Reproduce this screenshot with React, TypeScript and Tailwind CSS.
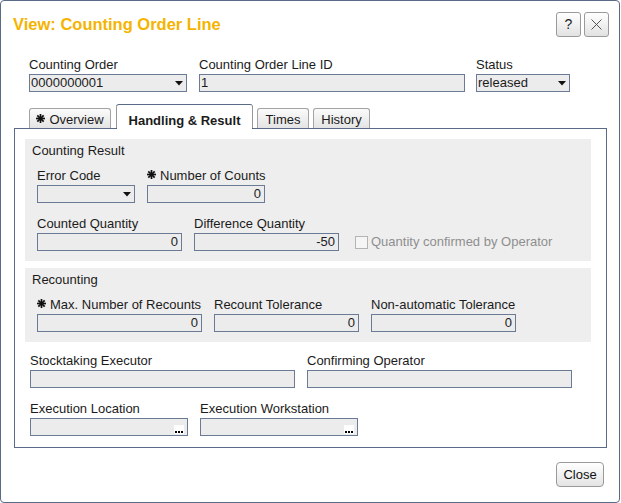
import type { ReactNode } from "react";

function Star() {
  return (
    <svg width="9" height="9" viewBox="0 0 9 9" className="inline-block mr-[4px] relative -top-[2px]">
      <g stroke="#111" strokeWidth="1.7">
        <line x1="4.5" y1="0" x2="4.5" y2="9" />
        <line x1="0" y1="4.5" x2="9" y2="4.5" />
        <line x1="1.3" y1="1.3" x2="7.7" y2="7.7" />
        <line x1="7.7" y1="1.3" x2="1.3" y2="7.7" />
      </g>
    </svg>
  );
}

function Arrow() {
  return (
    <svg width="8" height="5" viewBox="0 0 8 5" className="shrink-0">
      <path d="M0 0 H8 L4 4.5 Z" fill="#111" />
    </svg>
  );
}

function Dots() {
  return (
    <span className="self-end mb-px flex gap-px bg-white px-px pt-[6px] pb-[1px]">
      <span className="w-[2px] h-[2px] bg-black" />
      <span className="w-[2px] h-[2px] bg-black" />
      <span className="w-[2px] h-[2px] bg-black" />
    </span>
  );
}

type FieldProps = {
  label: string;
  width: string;
  star?: boolean;
  value?: string;
  kind?: "text" | "number" | "select" | "lookup";
};

function Field({ label, width, star, value = "", kind = "text" }: FieldProps) {
  return (
    <div className={`${width} shrink-0`}>
      <div className="leading-[17px] mb-px whitespace-nowrap">
        {star && <Star />}
        {label}
      </div>
      <div
        className={`h-[18px] border border-[#6b7b95] bg-[#ececec] flex items-center leading-[16px] ${
          kind === "number" ? "justify-end pr-[3px]" : "justify-between pl-px pr-[3px]"
        }`}
      >
        {kind === "number" ? value : <span>{value}</span>}
        {kind === "select" && <Arrow />}
        {kind === "lookup" && <Dots />}
      </div>
    </div>
  );
}

function Group({ title, children }: { title: string; children: ReactNode }) {
  return (
    <div className="bg-[#eeeeee] w-[566px] pt-[3px] pb-[10px]">
      <div className="leading-[17px] pl-[7px]">{title}</div>
      <div className="pl-[12px]">{children}</div>
    </div>
  );
}

function Tab({ label, width, star }: { label: string; width: string; star?: boolean }) {
  return (
    <div
      className={`${width} h-[20px] mb-px border border-b-0 border-[#a3a3a3] rounded-t-[3px] bg-gradient-to-b from-[#fbfbfb] to-[#e4e4e4] text-center leading-[17px] pt-[2px] whitespace-nowrap`}
    >
      {star && <Star />}
      {label}
    </div>
  );
}

export default function App() {
  return (
    <div className="w-[621px] h-[503px] bg-white font-['Liberation_Sans',Arial,sans-serif] text-[13px] text-[#1b1b1b]">
      <div className="w-[620px] h-[503px] border border-[#5a6b87] rounded-[4px] flex flex-col">
        {/* Header */}
        <div className="flex items-center justify-between pl-[12px] pr-[10px] pt-[11px]">
          <h1 className="text-[16.5px] font-bold text-[#f4b400] leading-[25px]">View: Counting Order Line</h1>
          <div className="flex gap-[3px]">
            <button className="w-[25px] h-[25px] border border-[#9a9a9a] rounded-[3px] bg-gradient-to-b from-white to-[#e2e2e2] text-[14px] text-[#222] flex items-center justify-center">
              ?
            </button>
            <button className="w-[25px] h-[25px] border border-[#9a9a9a] rounded-[3px] bg-gradient-to-b from-white to-[#e2e2e2] flex items-center justify-center">
              <svg width="11" height="11" viewBox="0 0 11 11">
                <path d="M0.5 0.5 L10.5 10.5 M10.5 0.5 L0.5 10.5" stroke="#444" strokeWidth="0.9" />
              </svg>
            </button>
          </div>
        </div>

        {/* Top fields */}
        <div className="flex pl-[28px] mt-[19px]">
          <Field label="Counting Order" width="w-[158px]" value="0000000001" kind="select" />
          <div className="ml-[12px]">
            <Field label="Counting Order Line ID" width="w-[266px]" value="1" />
          </div>
          <div className="ml-[11px]">
            <Field label="Status" width="w-[94px]" value="released" kind="select" />
          </div>
        </div>

        {/* Tabs */}
        <div className="ml-[13px] mt-[12px] w-[593px]">
          <div className="relative z-10 flex items-end pl-[15px] -mb-px">
            <Tab label="Overview" width="w-[82px]" star />
            <div
              className="ml-[5px] w-[137px] h-[25px] bg-white border-t border-x border-t-[#5a6b87] border-x-[#333] border-dotted rounded-t-[3px] font-bold text-center pt-[7px] leading-[17px] whitespace-nowrap"
              style={{ borderTopStyle: "solid" }}
            >
              Handling &amp; Result
            </div>
            <div className="ml-[4px]">
              <Tab label="Times" width="w-[52px]" />
            </div>
            <div className="ml-[4px]">
              <Tab label="History" width="w-[57px]" />
            </div>
          </div>

          {/* Panel */}
          <div className="border border-[#5a6b87] pl-[10px] pt-[10px] pb-[11px]">
            <Group title="Counting Result">
              <div className="flex mt-[8px]">
                <Field label="Error Code" width="w-[98px]" kind="select" />
                <div className="ml-[12px]">
                  <Field label="Number of Counts" width="w-[118px]" star value="0" kind="number" />
                </div>
              </div>
              <div className="flex items-end mt-[12px]">
                <Field label="Counted Quantity" width="w-[145px]" value="0" kind="number" />
                <div className="ml-[12px]">
                  <Field label="Difference Quantity" width="w-[145px]" value="-50" kind="number" />
                </div>
                <div className="ml-[16px] h-[18px] flex items-center text-[#8e8e8e]">
                  <span className="w-[13px] h-[13px] border border-[#b4b4b4] bg-[#f5f5f5] mr-[3px]" />
                  Quantity confirmed by Operator
                </div>
              </div>
            </Group>

            <div className="mt-[7px]">
              <Group title="Recounting">
                <div className="flex mt-[8px]">
                  <Field label="Max. Number of Recounts" width="w-[165px]" star value="0" kind="number" />
                  <div className="ml-[12px]">
                    <Field label="Recount Tolerance" width="w-[145px]" value="0" kind="number" />
                  </div>
                  <div className="ml-[12px]">
                    <Field label="Non-automatic Tolerance" width="w-[145px]" value="0" kind="number" />
                  </div>
                </div>
              </Group>
            </div>

            <div className="pl-[5px]">
              <div className="flex mt-[10px]">
                <Field label="Stocktaking Executor" width="w-[265px]" />
                <div className="ml-[12px]">
                  <Field label="Confirming Operator" width="w-[265px]" />
                </div>
              </div>
              <div className="flex mt-[12px]">
                <Field label="Execution Location" width="w-[158px]" kind="lookup" />
                <div className="ml-[12px]">
                  <Field label="Execution Workstation" width="w-[158px]" kind="lookup" />
                </div>
              </div>
            </div>
          </div>
        </div>

        {/* Footer */}
        <div className="flex justify-end pr-[15px] mt-[14px]">
          <button className="w-[48px] h-[25px] border border-[#9a9a9a] rounded-[4px] bg-gradient-to-b from-white to-[#e4e4e4] text-[13px] text-[#111]">
            Close
          </button>
        </div>
      </div>
    </div>
  );
}
